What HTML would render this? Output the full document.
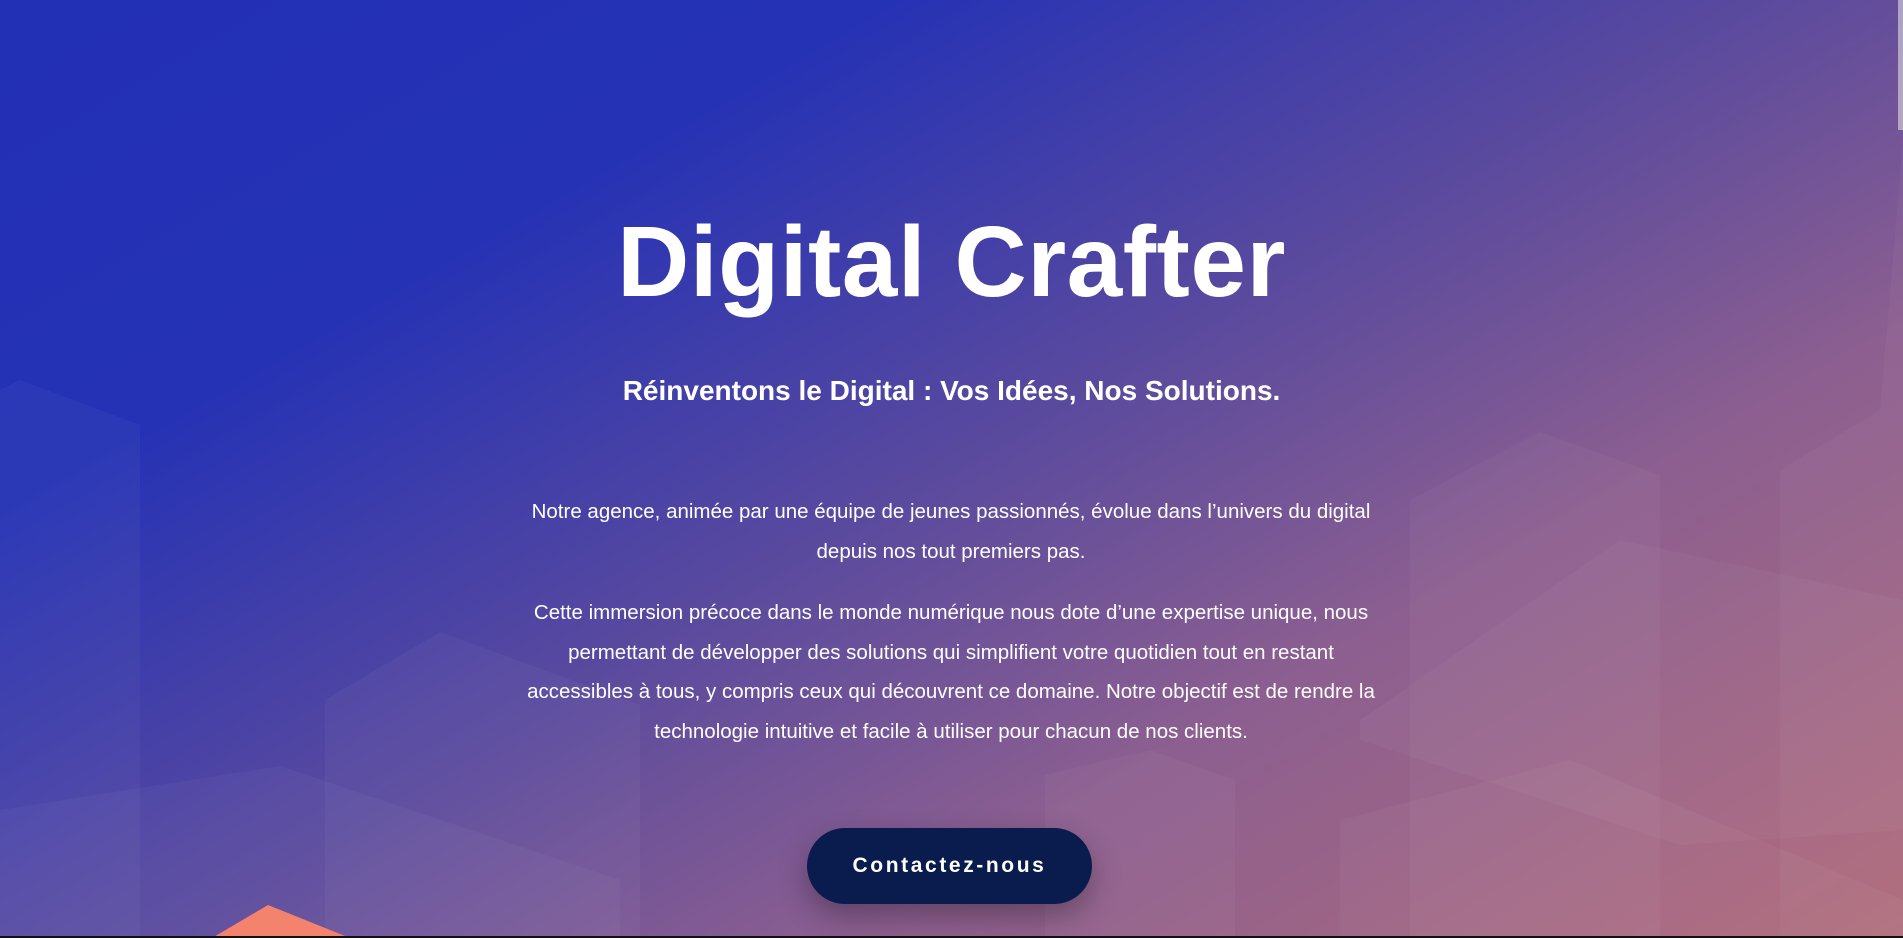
<!DOCTYPE html>
<html><head><meta charset="utf-8"><style>
html,body{margin:0;padding:0;width:1903px;height:938px;overflow:hidden}
body{background:linear-gradient(150deg,#2230b6 0%,#2532b5 25%,#5a4a9e 50%,#8c5f90 70%,#b06a7a 100%);position:relative;font-family:"Liberation Sans",sans-serif;color:#fff}
svg.bg{position:absolute;left:0;top:0}
h1{margin:0;position:absolute;top:205px;width:100%;text-align:center;font-size:100px;font-weight:bold;letter-spacing:0.5px}
h2{margin:0;position:absolute;top:375px;width:100%;text-align:center;font-size:28px;font-weight:bold}
.p{position:absolute;left:491px;width:920px;text-align:center;font-size:20.5px;line-height:39.5px}
.btn{position:absolute;left:807px;top:828px;width:285px;height:76px;border-radius:38px;background:#0a1b4e;box-shadow:0 12px 30px rgba(0,0,0,.3);font-weight:bold;font-size:21px;letter-spacing:2.6px;line-height:76px;text-align:center}
.bar{position:absolute;left:0;bottom:0;width:1903px;height:2px;background:#111}
</style></head><body>
<svg class="bg" width="1903" height="938">
<g fill="#fff" fill-opacity="0.035">
<polygon points="0,390 20,380 140,425 140,938 0,938"/>
<polygon points="325,700 440,632 640,705 640,938 325,938"/>
<polygon points="0,810 280,766 620,880 620,938 0,938"/>
<polygon points="1045,775 1150,750 1235,780 1235,938 1045,938"/>
<polygon points="1410,500 1540,432 1660,475 1660,938 1410,938"/>
<polygon points="1360,720 1620,540 1903,600 1903,830 1680,845 1360,740"/>
<polygon points="1780,470 1880,410 1903,140 1903,938 1780,938"/>
<polygon points="1340,820 1570,760 1903,900 1903,938 1340,938"/>
</g>
<polygon points="212,938 268,905 350,938" fill="#f4836e"/>
<rect x="1898" y="0" width="5" height="130" fill="#ddd" opacity=".6"/>
</svg>
<h1>Digital Crafter</h1>
<h2>Réinventons le Digital : Vos Idées, Nos Solutions.</h2>
<div class="p" style="top:492px">Notre agence, animée par une équipe de jeunes passionnés, évolue dans l’univers du digital<br>depuis nos tout premiers pas.</div>
<div class="p" style="top:593px">Cette immersion précoce dans le monde numérique nous dote d’une expertise unique, nous<br>permettant de développer des solutions qui simplifient votre quotidien tout en restant<br>accessibles à tous, y compris ceux qui découvrent ce domaine. Notre objectif est de rendre la<br>technologie intuitive et facile à utiliser pour chacun de nos clients.</div>
<div class="btn">Contactez-nous</div>
<div class="bar"></div>
</body></html>
